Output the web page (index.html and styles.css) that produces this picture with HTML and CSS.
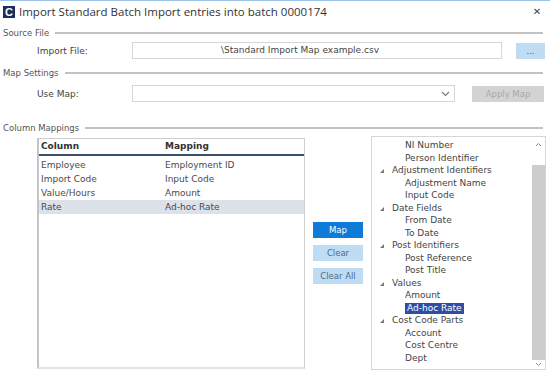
FILE: index.html
```html
<!DOCTYPE html>
<html lang="en">
  <head>
    <meta charset="UTF-8" />
    <title>Import Standard Batch Import entries into batch 0000174</title>
    <link rel="stylesheet" href="styles.css">
  </head>
  <body>
    <div class="window">
      <div class="titlebar">
        <span class="app-icon">C</span>
        <span class="title">Import Standard Batch Import entries into batch 0000174</span>
        <span class="close">&#x2715;</span>
      </div>

      <div class="group-head head-source"><span>Source File</span><i></i></div>
      <div class="field-row">
        <label class="field-label">Import File:</label>
        <div class="textbox file-box">\Standard Import Map example.csv</div>
        <button class="btn btn-browse">...</button>
      </div>

      <div class="group-head head-map"><span>Map Settings</span><i></i></div>
      <div class="field-row">
        <label class="field-label">Use Map:</label>
        <div class="textbox select-box">
          <svg width="9" height="6" viewBox="0 0 9 6"><path d="M1 1l3.5 3.5L8 1" fill="none" stroke="#777" stroke-width="1.1"/></svg>
        </div>
        <button class="btn btn-apply">Apply Map</button>
      </div>

      <div class="group-head head-columns"><span>Column Mappings</span><i></i></div>
      <div class="mappings">
        <div class="grid">
          <div class="grid-head">
            <span class="col-a">Column</span>
            <span class="col-b">Mapping</span>
          </div>
          <div class="grid-row"><span class="col-a">Employee</span><span class="col-b">Employment ID</span></div>
          <div class="grid-row"><span class="col-a">Import Code</span><span class="col-b">Input Code</span></div>
          <div class="grid-row"><span class="col-a">Value/Hours</span><span class="col-b">Amount</span></div>
          <div class="grid-row selected"><span class="col-a">Rate</span><span class="col-b">Ad-hoc Rate</span></div>
        </div>

        <div class="actions">
          <button class="btn btn-map">Map</button>
          <button class="btn btn-clear">Clear</button>
          <button class="btn btn-clear">Clear All</button>
        </div>

        <div class="tree">
          <ul class="tree-list">
            <li class="leaf"><span>NI Number</span></li>
            <li class="leaf"><span>Person Identifier</span></li>
            <li class="node"><span>Adjustment Identifiers</span></li>
            <li class="leaf"><span>Adjustment Name</span></li>
            <li class="leaf"><span>Input Code</span></li>
            <li class="node"><span>Date Fields</span></li>
            <li class="leaf"><span>From Date</span></li>
            <li class="leaf"><span>To Date</span></li>
            <li class="node"><span>Post Identifiers</span></li>
            <li class="leaf"><span>Post Reference</span></li>
            <li class="leaf"><span>Post Title</span></li>
            <li class="node"><span>Values</span></li>
            <li class="leaf"><span>Amount</span></li>
            <li class="leaf active"><span>Ad-hoc Rate</span></li>
            <li class="node"><span>Cost Code Parts</span></li>
            <li class="leaf"><span>Account</span></li>
            <li class="leaf"><span>Cost Centre</span></li>
            <li class="leaf"><span>Dept</span></li>
          </ul>
          <div class="scrollbar">
            <svg class="arrow" width="7" height="5" viewBox="0 0 7 5"><path d="M1 4l2.5-2.5L6 4" fill="none" stroke="#888" stroke-width="1"/></svg>
            <div class="thumb"></div>
            <svg class="arrow" width="7" height="5" viewBox="0 0 7 5"><path d="M1 1l2.5 2.5L6 1" fill="none" stroke="#888" stroke-width="1"/></svg>
          </div>
        </div>
      </div>
    </div>
  </body>
</html>
```

FILE: styles.css
```css
body {
  margin: 0;
  background-color: #fff;
  font-family: "DejaVu Sans", Verdana, sans-serif;
  font-size: 9px;
  color: #444;
}
.window {
  width: 550px;
  height: 372px;
  border-top: 1px solid #9cc2e8;
  box-sizing: border-box;
  overflow: hidden;
}
.titlebar {
  display: flex;
  align-items: center;
  height: 21px;
  padding-left: 3px;
}
.app-icon {
  width: 12px;
  height: 12px;
  background-color: #1c2f5c;
  color: #fff;
  font-family: "Liberation Sans", Arial, sans-serif;
  font-weight: bold;
  font-size: 11px;
  line-height: 12px;
  text-align: center;
  margin-right: 4px;
}
.title {
  flex: 1;
  font-family: "Open Sans", "Noto Sans", sans-serif;
  font-size: 11.5px;
  color: #333;
}
.close {
  width: 12px;
  margin-right: 7px;
  font-size: 10px;
  color: #444;
  text-align: center;
}
.group-head {
  display: flex;
  align-items: center;
  height: 12px;
  padding: 0 7px 0 3px;
  color: #555;
  font-size: 8.5px;
}
.group-head i {
  flex: 1;
  height: 2px;
  margin-left: 6px;
  background-color: #c2c2c2;
}
.head-source {
  margin-top: 5px;
}
.head-map {
  margin-top: 8px;
}
.head-columns {
  margin-top: 20px;
}
.field-row {
  display: flex;
  align-items: center;
  height: 17px;
  margin-top: 3px;
  padding-left: 37px;
}
.head-map + .field-row {
  margin-top: 6px;
}
.field-label {
  width: 95px;
  color: #444;
}
.textbox {
  border: 1px solid #d6d6d6;
  background-color: #fff;
  box-sizing: border-box;
  height: 17px;
}
.file-box {
  width: 370px;
  line-height: 15px;
  padding-left: 88px;
  color: #444;
}
.select-box {
  width: 323px;
  display: flex;
  align-items: center;
  justify-content: flex-end;
  padding-right: 4px;
}
.btn {
  border: none;
  padding: 0;
  font-family: "DejaVu Sans", Verdana, sans-serif;
  font-size: 8.5px;
  cursor: pointer;
}
.btn-browse {
  width: 29px;
  height: 16px;
  margin-left: 14px;
  background-color: #bedcf4;
  color: #555;
}
.btn-apply {
  width: 72px;
  height: 16px;
  margin-left: 17px;
  background-color: #d3d3d3;
  color: #a9a9a9;
}
.mappings {
  display: flex;
  align-items: flex-start;
  margin-top: 2px;
  padding-left: 37px;
}
.grid {
  width: 268px;
  height: 231px;
  margin-top: 2px;
  border: 1px solid #cfcfcf;
  border-left: 2px solid #c4c4c4;
  border-bottom: 2px solid #e2e2e2;
  box-sizing: border-box;
}
.grid-head {
  display: flex;
  height: 15px;
  line-height: 15px;
  font-weight: bold;
  color: #333;
  border-bottom: 2px solid #3a4d6a;
}
.grid-row {
  display: flex;
  height: 14px;
  line-height: 14px;
  color: #4a4a4a;
}
.grid-head + .grid-row {
  margin-top: 2px;
}
.grid-row.selected {
  background-color: #dde1ea;
}
.col-a {
  width: 124px;
  padding-left: 2px;
}
.actions {
  display: flex;
  flex-direction: column;
  gap: 7px;
  width: 50px;
  margin: 86px 8px 0 8px;
}
.btn-map,
.btn-clear {
  height: 16px;
}
.btn-map {
  background-color: #0f7bd8;
  color: #fff;
}
.btn-clear {
  background-color: #bedcf4;
  color: #4e6b88;
}
.tree {
  display: flex;
  width: 175px;
  height: 234px;
  border: 1px solid #d6d6d6;
  box-sizing: border-box;
}
.tree-list {
  flex: 1;
  list-style: none;
  margin: 0;
  padding: 2px 0 0 0;
  color: #444;
}
.tree-list li {
  height: 12.5px;
  line-height: 12.5px;
  white-space: nowrap;
}
.tree-list .node {
  position: relative;
  padding-left: 20px;
}
.tree-list .node::before {
  content: "";
  position: absolute;
  left: 8px;
  top: 5px;
  border-left: 4px solid transparent;
  border-bottom: 4px solid #777;
}
.tree-list .leaf {
  padding-left: 33px;
}
.tree-list .active span {
  display: inline-block;
  padding: 0 2px;
  line-height: 11px;
  background-color: #2d4ea6;
  color: #fff;
}
.scrollbar {
  display: flex;
  flex-direction: column;
  align-items: center;
  width: 13px;
  padding: 5px 0 2px;
}
.scrollbar .thumb {
  flex: 1;
  width: 13px;
  margin: 18px 0 2px;
  background-color: #cdcdcd;
}
```
